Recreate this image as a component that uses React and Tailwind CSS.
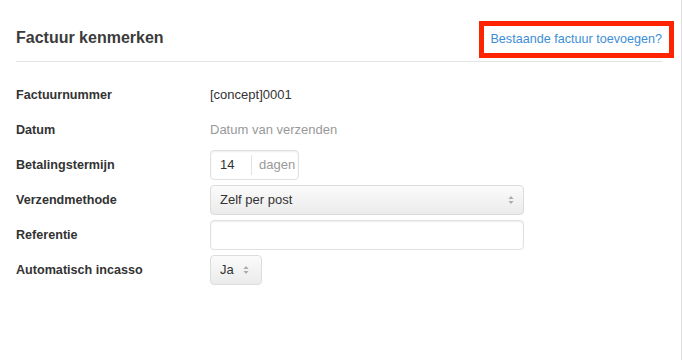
import React from "react";

const font = { fontFamily: '"Liberation Sans", Arial, sans-serif' };

function Arrows() {
  return (
    <svg width="6" height="10" viewBox="0 0 6 10" className="shrink-0">
      <path d="M3 1 L5.5 4 L0.5 4 Z" fill="#aaa" />
      <path d="M3 9 L5.5 6 L0.5 6 Z" fill="#aaa" />
    </svg>
  );
}

function Row({ label, children }) {
  return (
    <div className="flex items-center h-[30px]">
      <div className="w-[194px] shrink-0 font-bold text-[12.6px] text-[#333]">{label}</div>
      <div className="flex items-center text-[13px] text-[#333]">{children}</div>
    </div>
  );
}

export default function App() {
  return (
    <div className="relative w-[682px] h-[360px] bg-white border-r border-[#dedede] overflow-hidden" style={font}>
      <div className="pl-4 pr-[19px]">
        <div className="flex justify-between items-baseline pt-[26px] pb-[10px] border-b border-[#e3e3e3]">
          <h2 className="text-[16px] leading-[24px] font-bold text-[#3b3b3b]">Factuur kenmerken</h2>
          <a className="text-[12.6px] leading-[24px] text-[#3d8ed8]">Bestaande factuur toevoegen?</a>
        </div>
      </div>

      {/* red highlight over the link */}
      <div className="absolute left-[479px] top-[21px] w-[195px] h-[37px] border-[5px] border-[#ff2400]" />

      <div className="flex flex-col gap-[5px] pl-4 pt-[18px]">
        <Row label="Factuurnummer">[concept]0001</Row>
        <Row label="Datum">
          <span className="text-[#999]">Datum van verzenden</span>
        </Row>
        <Row label="Betalingstermijn">
          <div className="flex items-center h-[30px] w-[89px] border border-[#e0e0e0] rounded-[4px] shadow-[inset_0_1px_2px_rgba(0,0,0,0.07)]">
            <span className="w-[40px] pl-[9px]">14</span>
            <span className="h-[20px] border-l border-[#e3e3e3]" />
            <span className="pl-[7px] text-[#999]">dagen</span>
          </div>
        </Row>
        <Row label="Verzendmethode">
          <div className="flex items-center justify-between h-[30px] w-[314px] px-[9px] border border-[#dcdcdc] rounded-[4px] bg-gradient-to-b from-[#fbfbfb] to-[#ebebeb]">
            <span>Zelf per post</span>
            <Arrows />
          </div>
        </Row>
        <Row label="Referentie">
          <div className="h-[30px] w-[314px] border border-[#e0e0e0] rounded-[4px] shadow-[inset_0_1px_2px_rgba(0,0,0,0.07)]" />
        </Row>
        <Row label="Automatisch incasso">
          <div className="flex items-center justify-between h-[30px] w-[52px] pl-[9px] pr-[12px] border border-[#dcdcdc] rounded-[4px] bg-gradient-to-b from-[#fbfbfb] to-[#ebebeb]">
            <span>Ja</span>
            <Arrows />
          </div>
        </Row>
      </div>
    </div>
  );
}
